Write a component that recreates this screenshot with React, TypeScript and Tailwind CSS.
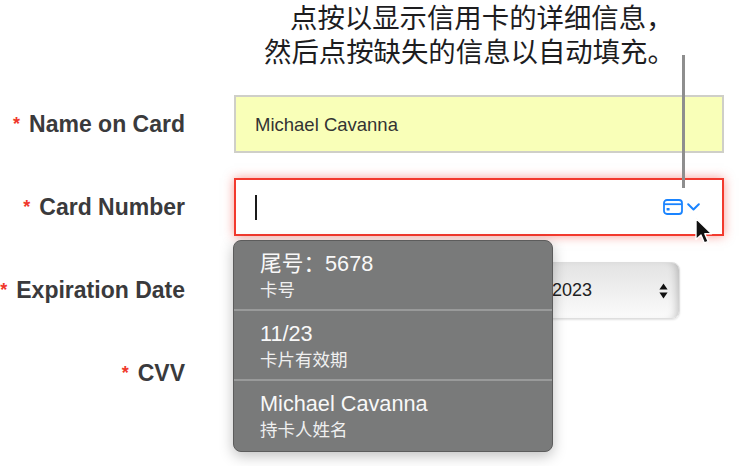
const sans = "font-['Liberation_Sans','Noto_Sans_CJK_SC',sans-serif]";

function Label({ text }: { text: string }) {
  return (
    <div className="flex w-[185px] shrink-0 justify-end gap-[9px] text-[23px] leading-[27px] font-bold text-[#3a3a3c]">
      <span className="text-[18px] text-[#f0382b]">*</span>
      <span>{text}</span>
    </div>
  );
}

function Option({ title, sub, last }: { title: string; sub: string; last?: boolean }) {
  return (
    <div className={`h-[70px] pl-[26px] pt-[10px] ${last ? "" : "border-b-2 border-[#999a9a]"}`}>
      <div className="text-[21.7px] leading-[26px] text-[#f8f8f8]">{title}</div>
      <div className="mt-[2px] text-[17.5px] leading-[22px] text-[#f0f0f0]">{sub}</div>
    </div>
  );
}

export default function App() {
  return (
    <div className={`relative h-[466px] w-[747px] overflow-hidden bg-white ${sans}`}>
      {/* Caption */}
      <div className="h-[95px] pl-[264px] pt-[2px] text-[27.4px] leading-[34px] text-[#1d1d1f]">
        <div className="pl-[26px]">点按以显示信用卡的详细信息，</div>
        <div>然后点按缺失的信息以自动填充。</div>
      </div>

      {/* Form rows */}
      <div className="flex flex-col">
        <div className="flex items-center gap-[49px]">
          <Label text="Name on Card" />
          <div className="flex h-[58px] w-[490px] items-center border-2 border-[#cfcfc8] bg-[#f9ffb8] pl-[19px] pt-[1px] text-[18.5px] text-[#333333]">
            Michael Cavanna
          </div>
        </div>

        <div className="mt-[25px] flex items-center gap-[49px]">
          <Label text="Card Number" />
          <div className="flex h-[58px] w-[490px] items-center border-2 border-[#f23a2e] bg-white pl-[19px] shadow-[0_0_10px_rgba(242,58,46,0.5)]">
            <div className="h-[25px] w-[2px] bg-[#1a1a1a]" />
            <div className="ml-auto mr-[22px] flex items-center gap-[4px]">
              <svg width="20" height="16" viewBox="0 0 20 16" fill="none">
                <rect x="1" y="1" width="18" height="14" rx="3" stroke="#1a84ff" strokeWidth="1.8" />
                <path d="M1 5.2h18" stroke="#1a84ff" strokeWidth="1.8" />
                <rect x="3.6" y="9" width="3" height="2.6" rx="0.6" fill="#1a84ff" />
              </svg>
              <svg width="13" height="8" viewBox="0 0 13 8" fill="none">
                <path d="M1.2 1.2 6.5 6.5 11.8 1.2" stroke="#1a84ff" strokeWidth="2" strokeLinecap="round" strokeLinejoin="round" />
              </svg>
            </div>
          </div>
        </div>

        <div className="mt-[26px] flex items-center gap-[49px]">
          <Label text="Expiration Date" />
          <div className="flex h-[57px] w-[446px] items-center justify-end rounded-[8px] border border-[#dedede] bg-gradient-to-b from-[#e3e3e3] to-[#fbfbfb] pr-[11px] text-[18px] text-[#222222] shadow-[inset_-8px_0_8px_-6px_rgba(0,0,0,0.22),0_1px_2px_rgba(0,0,0,0.12)]">
            <span className="mr-[67px]">2023</span>
            <svg width="9" height="16" viewBox="0 0 9 16" fill="#111111">
              <path d="M4.5 0.5 8.6 6.4H0.4Z" />
              <path d="M4.5 15.5 0.4 9.6H8.6Z" />
            </svg>
          </div>
        </div>

        <div className="mt-[41px] flex items-center gap-[49px]">
          <Label text="CVV" />
        </div>
      </div>

      {/* Leader line */}
      <div className="absolute left-[682px] top-[55px] h-[133px] w-[3px] bg-[#8e8e8e]" />

      {/* Autofill popup */}
      <div className="absolute left-[233px] top-[240px] h-[212px] w-[320px] overflow-hidden rounded-[8px] border border-[#5c5c5c] bg-[#797a7a] shadow-[0_4px_14px_rgba(0,0,0,0.25)]">
        <Option title="尾号：5678" sub="卡号" />
        <Option title="11/23" sub="卡片有效期" />
        <Option title="Michael Cavanna" sub="持卡人姓名" last />
      </div>

      {/* Pointer */}
      <svg className="absolute left-[694px] top-[217px]" width="20" height="29" viewBox="0 0 20 29">
        <path d="M2 1.5V22.5L7 18 10.4 26 14.2 24.4 10.8 16.8H17.6Z" fill="#111111" stroke="#ffffff" strokeWidth="1.4" strokeLinejoin="round" />
      </svg>
    </div>
  );
}
